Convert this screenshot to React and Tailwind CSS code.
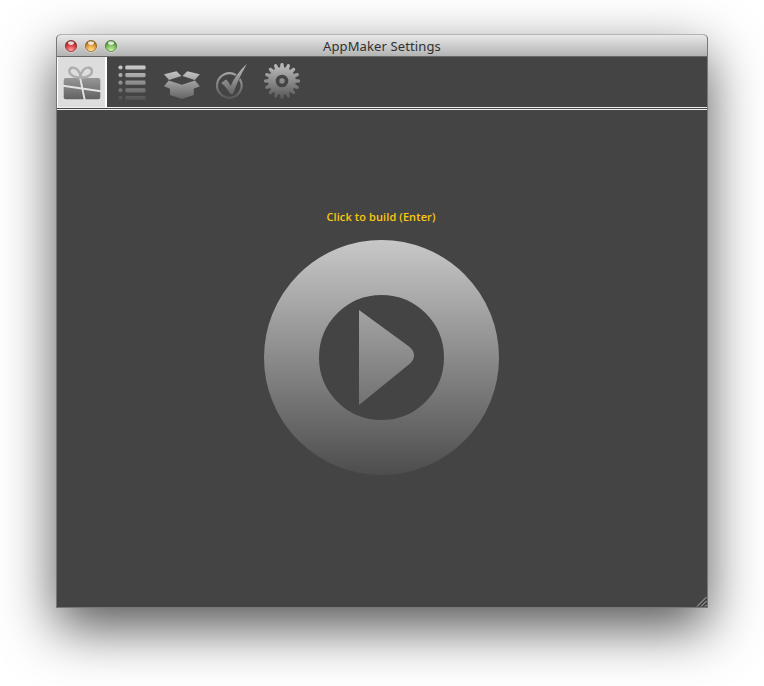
const lights = [
  { id: 'close', a: '#84282a', b: '#dd4448', c: '#ffb0a8' },
  { id: 'min', a: '#8f5e20', b: '#e6a244', c: '#ffe9a0' },
  { id: 'zoom', a: '#4a7c34', b: '#80c05e', c: '#d2f7b4' },
];

function Light({ id, a, b, c }) {
  return (
    <svg width="14" height="14" viewBox="0 0 14 14">
      <defs>
        <radialGradient id={id} cx="0.5" cy="0.95" r="0.85">
          <stop offset="0" stopColor={c} />
          <stop offset="0.6" stopColor={b} />
          <stop offset="1" stopColor={a} />
        </radialGradient>
      </defs>
      <circle cx="7" cy="7.5" r="6.2" fill="#fff" opacity="0.5" />
      <circle cx="7" cy="7" r="5.6" fill={`url(#${id})`} stroke={a} strokeWidth="0.8" />
      <ellipse cx="7" cy="4.1" rx="3" ry="1.8" fill="#fff" opacity="0.8" />
    </svg>
  );
}

function Fade({ id, y1, y2, from = '#c4c4c4', to = '#505050' }) {
  return (
    <linearGradient id={id} gradientUnits="userSpaceOnUse" x1="0" x2="0" y1={y1} y2={y2}>
      <stop offset="0" stopColor={from} />
      <stop offset="1" stopColor={to} />
    </linearGradient>
  );
}

function GiftIcon() {
  return (
    <svg width="47" height="50" viewBox="58 57 47 50">
      <defs><Fade id="gift" y1="66" y2="100" from="#b5b5b5" to="#606060" /></defs>
      <rect x="63.7" y="78" width="36.6" height="21.3" rx="2" fill="url(#gift)" />
      <path d="M63 85.8 L101 91.2 M80 77 L84.7 100" stroke="#e2e2e2" strokeWidth="1.9" fill="none" />
      <path d="M80.5 77.5 C75 78 69.5 75 69.3 71.5 C69.2 67 74.5 66.5 77.5 69.8 C79.5 72 80.5 75 80.5 77.5 Z M80.5 77.5 C86 78 91.8 75.3 92 71.5 C92 67 86.5 66.5 83.5 69.8 C81.5 72 80.5 75 80.5 77.5 Z" fill="none" stroke="#adadad" strokeWidth="2.4" />
    </svg>
  );
}

function ListIcon() {
  return (
    <svg width="50" height="50" viewBox="107 57 50 50">
      <defs><Fade id="list" y1="65" y2="101" from="#cecece" to="#4c4c4c" /></defs>
      <g fill="url(#list)">
        {[67.5, 75.1, 82.7, 90.3, 98].map((y) => (
          <g key={y}>
            <circle cx="120.5" cy={y} r="2.1" />
            <rect x="125.3" y={y - 2.1} width="20.3" height="4.2" rx="1.4" />
          </g>
        ))}
      </g>
    </svg>
  );
}

function BoxIcon() {
  return (
    <svg width="50" height="50" viewBox="157 57 50 50">
      <defs><Fade id="box" y1="70" y2="100" from="#c8c8c8" to="#606060" /></defs>
      <path fill="url(#box)" d="M164 74.3 L176.5 71.2 L181.4 76 L169 80 Z M199.8 74.3 L187.3 71.2 L182.4 76 L194.8 80 Z M168.7 80.4 L181.9 84.8 L195 80.4 L199.9 86.3 L193.8 88.8 V95 L181.9 99 L170 95 V88.8 L164 86.3 Z" />
    </svg>
  );
}

function CheckIcon() {
  return (
    <svg width="50" height="50" viewBox="207 57 50 50">
      <defs><Fade id="check" y1="62" y2="101" /></defs>
      <path d="M236 75.2 A12.3 12.3 0 1 0 239.8 79.1" fill="none" stroke="url(#check)" strokeWidth="2.2" />
      <path d="M246.8 64 C241 74 236.5 84 233 94 L230.4 94 C227.8 89.5 225 86 221 83 L226 79.5 C228.4 81.6 229.6 84 230.6 86 C234 78 239.5 70.5 246.8 64 Z" fill="url(#check)" />
    </svg>
  );
}

const teeth = Array.from({ length: 16 }, (_, i) => i * 22.5);

function GearIcon() {
  return (
    <svg width="50" height="50" viewBox="257 57 50 50">
      <defs>
        <Fade id="gear" y1="62" y2="101" />
        <mask id="gearShape" maskUnits="userSpaceOnUse" x="257" y="57" width="50" height="50">
          <circle cx="282" cy="81" r="13.7" fill="#fff" />
          {teeth.map((t) => (
            <path key={t} d="M279.9 68 L280.5 63.9 Q280.7 62.9 282 62.9 Q283.3 62.9 283.5 63.9 L284.1 68 Z" fill="#fff" transform={`rotate(${t} 282 81)`} />
          ))}
          <circle cx="282" cy="81" r="6.3" fill="#000" />
          <circle cx="282" cy="81" r="2.7" fill="#fff" />
        </mask>
      </defs>
      <rect x="257" y="57" width="50" height="50" fill="url(#gear)" mask="url(#gearShape)" />
    </svg>
  );
}

function PlayIcon() {
  return (
    <svg width="236" height="236" viewBox="264 239 236 236">
      <defs><Fade id="play" y1="240" y2="475" from="#c8c8c8" to="#4d4d4d" /></defs>
      <circle cx="381.5" cy="357.5" r="90" fill="none" stroke="url(#play)" strokeWidth="55" />
      <path d="M359 310 L409 346.5 Q414 350.5 414 355.5 Q414 360 409.5 364 L359 405 Z" fill="url(#play)" />
    </svg>
  );
}

export default function App() {
  return (
    <div className="h-[686px] w-[764px] overflow-hidden bg-white pl-14 pt-[34px]">
      <div className="flex h-[574px] w-[652px] flex-col rounded-t-[5px] border border-[#777777] border-t-[#b5b5b5] bg-[#444444] shadow-[0_20px_54px_rgba(0,0,0,0.67)]">
        <header className="grid h-[22px] shrink-0 grid-cols-[1fr_auto_1fr] items-center rounded-t-[4px] border-b border-[#686868] bg-linear-to-b from-[#e8e8e8] to-[#b3b3b3]">
          <div className="flex gap-[6px] pl-[7px]">
            {lights.map((l) => <Light key={l.id} {...l} />)}
          </div>
          <h1 className="whitespace-nowrap font-['Noto_Sans',sans-serif] text-[13px] leading-5 tracking-[0.12px] text-[#303030]">AppMaker Settings</h1>
        </header>
        <nav className="flex h-[50px] shrink-0">
          <button className="h-[50px] w-[50px] border-l border-r-2 border-white bg-[#dddddd]"><GiftIcon /></button>
          <button><ListIcon /></button>
          <button><BoxIcon /></button>
          <button><CheckIcon /></button>
          <button><GearIcon /></button>
        </nav>
        <div className="h-[3px] shrink-0 border-y border-[#f0f0f0]" />
        <main className="flex min-h-0 flex-1 flex-col items-center pt-[99px]">
          <p className="mr-[2px] whitespace-nowrap font-['Open_Sans','Noto_Sans',sans-serif] text-[11px] font-semibold leading-4 tracking-[0.1px] text-[#fcc80e]">Click to build (Enter)</p>
          <button className="mt-[14px]"><PlayIcon /></button>
          <svg className="mt-auto self-end" width="11" height="11" viewBox="0 0 11 11">
            <path d="M1 10.5 L10.5 1 M5 10.5 L10.5 5 M9 10.5 L10.5 9" stroke="#b5b5b5" strokeWidth="1" />
          </svg>
        </main>
      </div>
    </div>
  );
}
